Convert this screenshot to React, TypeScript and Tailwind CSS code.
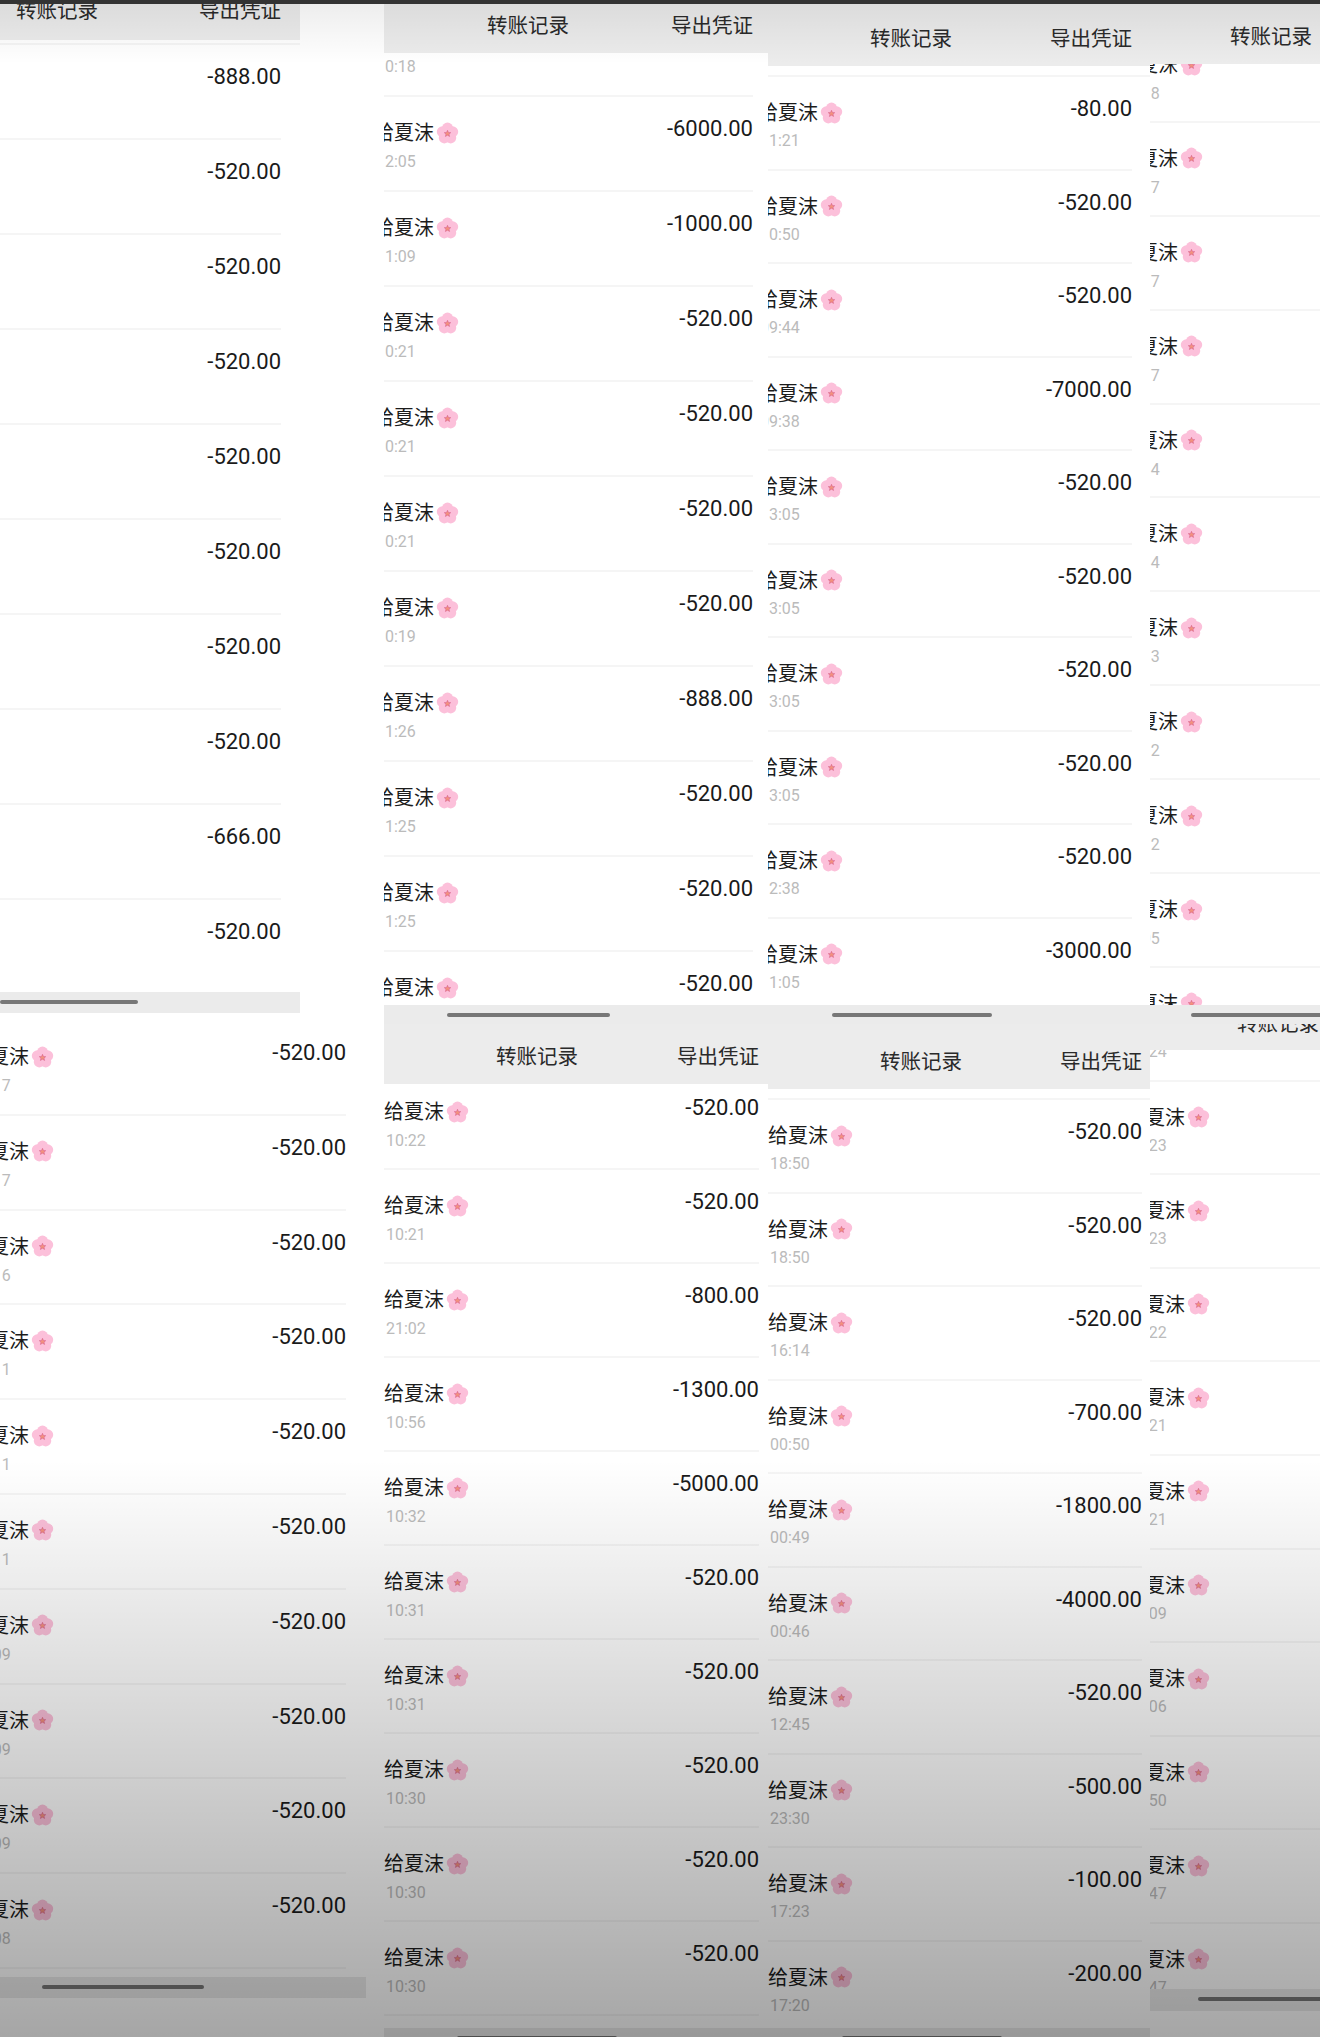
import clsx from 'clsx';

interface Record {
  time: string;
  amount: string;
}

interface TileProps {
  box: string; // 宽高
  header?: string; // 高度和内边距
  rows: Record[];
  list: string; // 列表偏移，被裁掉的行靠它露出来
  row: string;
  name: string; // 名字被截图裁掉多少
  time?: string;
  footer: string;
  bar: string;
}

const toRows = (times: string[], amounts: string[]): Record[] =>
  times.map((time, i) => ({ time, amount: amounts[i] }));

function Flower() {
  return (
    <svg viewBox="0 0 24 24" className="ml-[2px] h-[23px] w-[23px] shrink-0">
      <g fill="#fcc0da">
        <circle cx="12" cy="12" r="7.5" />
        <circle cx="12" cy="6.4" r="5.8" />
        <circle cx="12" cy="6.4" r="5.8" transform="rotate(72 12 12)" />
        <circle cx="12" cy="6.4" r="5.8" transform="rotate(144 12 12)" />
        <circle cx="12" cy="6.4" r="5.8" transform="rotate(216 12 12)" />
        <circle cx="12" cy="6.4" r="5.8" transform="rotate(288 12 12)" />
      </g>
      <polygon
        points="12,8.6 13,10.9 15.4,11.1 13.6,12.7 14.2,15.1 12,13.8 9.8,15.1 10.4,12.7 8.6,11.1 11,10.9"
        fill="#f2917f"
        stroke="#d0558a"
        strokeWidth="0.5"
      />
    </svg>
  );
}

function Tile({ box, header, rows, list, row, name, time = 'mt-[5px]', footer, bar }: TileProps) {
  return (
    <section className={clsx('flex flex-col overflow-hidden', box)}>
      {header && (
        <header className={clsx('flex shrink-0 items-end justify-between bg-[#ececec] text-[20.5px] leading-[28px] text-[#2a2a2a]', header)}>
          <span className="shrink-0">转账记录</span>
          <span className="shrink-0">导出凭证</span>
        </header>
      )}
      <div className="min-h-0 flex-1 overflow-hidden">
        <div className={list}>
          {rows.map((r, i) => (
            <div key={i} className={clsx('flex justify-between border-b-2 border-[#f5f5f5]', row)}>
              <div className={clsx('pt-[22px]', name)}>
                <div className="flex items-center text-[20px] leading-[28px] text-[#1c1c1c]">
                  <span className="shrink-0">给夏沫</span>
                  <Flower />
                </div>
                <div className={clsx('ml-[2px] text-[16px] leading-[20px] text-[#bbb]', time)}>{r.time}</div>
              </div>
              <div className="pt-[18px] text-[22px] leading-[28px] text-[#1a1a1a]">{r.amount}</div>
            </div>
          ))}
        </div>
      </div>
      <div className={clsx('shrink-0 bg-[#ebebeb] pt-[8px]', footer)}>
        <div className={clsx('h-[4px] rounded-full bg-[#777]', bar)} />
      </div>
    </section>
  );
}

export default function App() {
  return (
    <div className="relative h-[2037px] w-[1320px] overflow-hidden bg-white font-['Roboto','Noto_Sans_CJK_SC',sans-serif]">
      <div className="h-[4px] bg-[#333]" />
      <div className="grid grid-cols-[384px_384px_382px_170px]">
        <div className="flex flex-col">
          <Tile
            box="h-[1009px] w-[300px]"
            header="h-[36px] pb-[15px] pl-[16px] pr-[19px]"
            list="mt-[3px] border-t-2 border-[#f5f5f5]"
            row="mr-[19px] h-[95px]"
            name="-ml-[200px]"
            footer="h-[21px]"
            bar="w-[138px]"
            rows={toRows(
              ['20:17', '20:17', '20:16', '20:11', '20:11', '20:11', '20:09', '20:09', '20:09', '20:08'],
              ['-888.00', '-520.00', '-520.00', '-520.00', '-520.00', '-520.00', '-520.00', '-520.00', '-666.00', '-520.00'],
            )}
          />
          <Tile
            box="h-[985px] w-[366px]"
            list="mt-[8px]"
            row="mr-[20px] h-[94.8px]"
            name="-ml-[31px]"
            footer="h-[21px]"
            bar="ml-[42px] w-[162px]"
            rows={toRows(
              ['10:17', '10:17', '10:16', '10:11', '10:11', '10:11', '10:09', '10:09', '10:09', '10:08'],
              ['-520.00', '-520.00', '-520.00', '-520.00', '-520.00', '-520.00', '-520.00', '-520.00', '-520.00', '-520.00'],
            )}
          />
        </div>
        <div className="flex flex-col">
          <Tile
            box="h-[1020px]"
            header="h-[49px] pb-[13px] pl-[103px] pr-[15px]"
            list="-mt-[51px]"
            row="mr-[15px] h-[95px]"
            name="-ml-[10px]"
            footer="h-[19px]"
            bar="ml-[63px] w-[163px]"
            rows={toRows(
              ['10:18', '12:05', '11:09', '10:21', '10:21', '10:21', '10:19', '11:26', '11:25', '11:25', '11:25'],
              ['-520.00', '-6000.00', '-1000.00', '-520.00', '-520.00', '-520.00', '-520.00', '-888.00', '-520.00', '-520.00', '-520.00'],
            )}
          />
          <Tile
            box="h-[1013px]"
            header="h-[60px] pb-[13px] pl-[112px] pr-[9px]"
            list="-mt-[8px]"
            row="mr-[9px] h-[94px]"
            name="ml-0"
            footer="h-[9px]"
            bar="ml-[73px] w-[160px]"
            rows={toRows(
              ['10:22', '10:21', '21:02', '10:56', '10:32', '10:31', '10:31', '10:30', '10:30', '10:30'],
              ['-520.00', '-520.00', '-800.00', '-1300.00', '-5000.00', '-520.00', '-520.00', '-520.00', '-520.00', '-520.00'],
            )}
          />
        </div>
        <div className="flex flex-col">
          <Tile
            box="h-[1020px]"
            header="h-[62px] pb-[13px] pl-[102px] pr-[18px]"
            list="mt-[9px] border-t-2 border-[#f5f5f5]"
            row="mr-[18px] h-[93.55px]"
            name="-ml-[10px]"
            time="mt-[4px]"
            footer="h-[19px]"
            bar="ml-[64px] w-[160px]"
            rows={toRows(
              ['11:21', '10:50', '09:44', '09:38', '13:05', '13:05', '13:05', '13:05', '12:38', '11:05'],
              ['-80.00', '-520.00', '-520.00', '-7000.00', '-520.00', '-520.00', '-520.00', '-520.00', '-520.00', '-3000.00'],
            )}
          />
          <Tile
            box="h-[1013px]"
            header="h-[65px] pb-[13px] pl-[112px] pr-[8px]"
            list="mt-[9px] border-t-2 border-[#f5f5f5]"
            row="mr-[8px] h-[93.55px]"
            name="ml-0"
            time="mt-[4px]"
            footer="h-[9px]"
            bar="ml-[74px] w-[160px]"
            rows={toRows(
              ['18:50', '18:50', '16:14', '00:50', '00:49', '00:46', '12:45', '23:30', '17:23', '17:20'],
              ['-520.00', '-520.00', '-520.00', '-700.00', '-1800.00', '-4000.00', '-520.00', '-500.00', '-100.00', '-200.00'],
            )}
          />
        </div>
        <div className="flex flex-col">
          <Tile
            box="h-[1020px]"
            header="h-[60px] w-[382px] pb-[13px] pl-[80px] pr-[19px]"
            list="-mt-[35px]"
            row="w-[362px] h-[93.9px]"
            name="-ml-[32px]"
            footer="h-[19px]"
            bar="ml-[41px] w-[160px]"
            rows={toRows(
              ['20:18', '20:17', '20:17', '20:17', '20:14', '20:14', '20:13', '20:12', '20:12', '20:05', '20:05'],
              ['-520.00', '-520.00', '-520.00', '-520.00', '-520.00', '-520.00', '-520.00', '-520.00', '-520.00', '-520.00', '-520.00'],
            )}
          />
          <Tile
            box="h-[987px]"
            header="h-[26px] w-[382px] pb-[12px] pl-[87px] pr-[19px]"
            list="-mt-[62px]"
            row="w-[362px] h-[93.6px]"
            name="-ml-[25px]"
            time="mt-[4px]"
            footer="h-[22px]"
            bar="ml-[48px] w-[160px]"
            rows={toRows(
              ['10:24', '10:23', '10:23', '10:22', '10:21', '10:21', '10:09', '10:06', '09:50', '09:47', '09:47'],
              ['-520.00', '-520.00', '-520.00', '-520.00', '-520.00', '-520.00', '-520.00', '-520.00', '-520.00', '-520.00', '-520.00'],
            )}
          />
        </div>
      </div>
      {/* 视频截图上下的渐变阴影 */}
      <div className="pointer-events-none absolute inset-x-0 top-[4px] h-[60px] bg-gradient-to-b from-black/[0.07] to-transparent" />
      <div className="pointer-events-none absolute inset-x-0 bottom-0 top-[1460px] bg-gradient-to-b from-transparent to-black/[0.35]" />
    </div>
  );
}
